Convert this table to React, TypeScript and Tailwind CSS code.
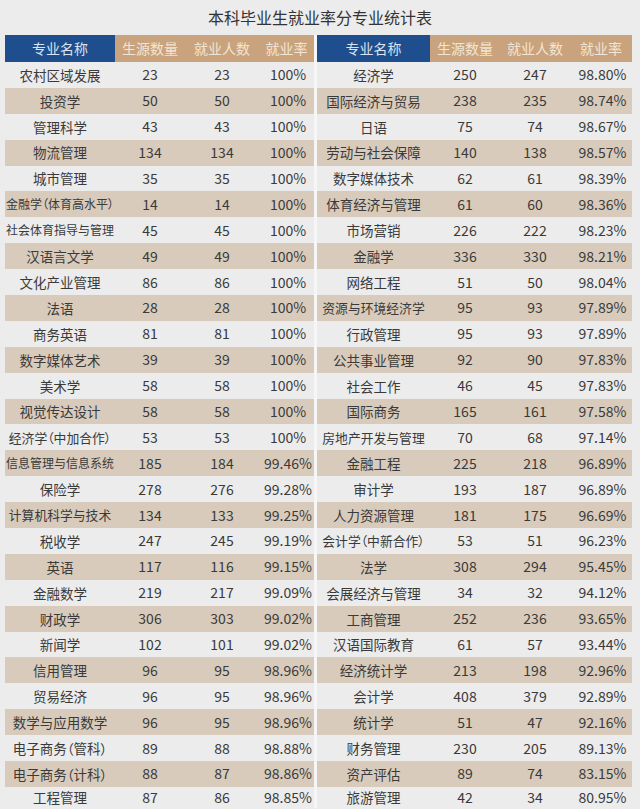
type Row = [string, number, number, string];

const left: Row[] = [
  ["农村区域发展", 23, 23, "100%"],
  ["投资学", 50, 50, "100%"],
  ["管理科学", 43, 43, "100%"],
  ["物流管理", 134, 134, "100%"],
  ["城市管理", 35, 35, "100%"],
  ["金融学（体育高水平）", 14, 14, "100%"],
  ["社会体育指导与管理", 45, 45, "100%"],
  ["汉语言文学", 49, 49, "100%"],
  ["文化产业管理", 86, 86, "100%"],
  ["法语", 28, 28, "100%"],
  ["商务英语", 81, 81, "100%"],
  ["数字媒体艺术", 39, 39, "100%"],
  ["美术学", 58, 58, "100%"],
  ["视觉传达设计", 58, 58, "100%"],
  ["经济学（中加合作）", 53, 53, "100%"],
  ["信息管理与信息系统", 185, 184, "99.46%"],
  ["保险学", 278, 276, "99.28%"],
  ["计算机科学与技术", 134, 133, "99.25%"],
  ["税收学", 247, 245, "99.19%"],
  ["英语", 117, 116, "99.15%"],
  ["金融数学", 219, 217, "99.09%"],
  ["财政学", 306, 303, "99.02%"],
  ["新闻学", 102, 101, "99.02%"],
  ["信用管理", 96, 95, "98.96%"],
  ["贸易经济", 96, 95, "98.96%"],
  ["数学与应用数学", 96, 95, "98.96%"],
  ["电子商务（管科）", 89, 88, "98.88%"],
  ["电子商务（计科）", 88, 87, "98.86%"],
  ["工程管理", 87, 86, "98.85%"],
];

const right: Row[] = [
  ["经济学", 250, 247, "98.80%"],
  ["国际经济与贸易", 238, 235, "98.74%"],
  ["日语", 75, 74, "98.67%"],
  ["劳动与社会保障", 140, 138, "98.57%"],
  ["数字媒体技术", 62, 61, "98.39%"],
  ["体育经济与管理", 61, 60, "98.36%"],
  ["市场营销", 226, 222, "98.23%"],
  ["金融学", 336, 330, "98.21%"],
  ["网络工程", 51, 50, "98.04%"],
  ["资源与环境经济学", 95, 93, "97.89%"],
  ["行政管理", 95, 93, "97.89%"],
  ["公共事业管理", 92, 90, "97.83%"],
  ["社会工作", 46, 45, "97.83%"],
  ["国际商务", 165, 161, "97.58%"],
  ["房地产开发与管理", 70, 68, "97.14%"],
  ["金融工程", 225, 218, "96.89%"],
  ["审计学", 193, 187, "96.89%"],
  ["人力资源管理", 181, 175, "96.69%"],
  ["会计学（中新合作）", 53, 51, "96.23%"],
  ["法学", 308, 294, "95.45%"],
  ["会展经济与管理", 34, 32, "94.12%"],
  ["工商管理", 252, 236, "93.65%"],
  ["汉语国际教育", 61, 57, "93.44%"],
  ["经济统计学", 213, 198, "92.96%"],
  ["会计学", 408, 379, "92.89%"],
  ["统计学", 51, 47, "92.16%"],
  ["财务管理", 230, 205, "89.13%"],
  ["资产评估", 89, 74, "83.15%"],
  ["旅游管理", 42, 34, "80.95%"],
];

// 名称太长时缩小字号；括号按半角宽度算（palt）
function nameSize(name: string) {
  const parens = (name.match(/[（）]/g) || []).length;
  const w = name.length - parens * 0.5;
  if (w >= 9) return "text-[12px]";
  if (w >= 8) return "text-[12.8px]";
  return "text-[13.5px]";
}

function Table({ rows, cols }: { rows: Row[]; cols: string }) {
  return (
    <div className="flex flex-col">
      <div className={`grid h-[27px] items-center text-[14px] ${cols}`}>
        <div className="flex h-full items-center justify-center bg-[#1f4e8e] text-[#dbe3ee]">专业名称</div>
        <div className="flex h-full items-center justify-center bg-[#c9a37d] text-[#f3e5d3]">生源数量</div>
        <div className="flex h-full items-center justify-center bg-[#c9a37d] text-[#f3e5d3]">就业人数</div>
        <div className="flex h-full items-center justify-center bg-[#c9a37d] text-[#f3e5d3]">就业率</div>
      </div>
      {rows.map((r, i) => (
        <div
          key={r[0]}
          className={`grid shrink-0 items-center text-[14px] text-[#3a3a3a] ${cols} ${
            i === rows.length - 1 ? "h-[21px]" : "h-[25.9px]"
          } ${i % 2 === 1 ? "bg-[#d9cbbb]" : "bg-[#ececec]"}`}
        >
          <div className={`whitespace-nowrap text-center [font-feature-settings:'palt'] ${nameSize(r[0])}`}>
            {r[0]}
          </div>
          <div className="text-center">{r[1]}</div>
          <div className="text-center">{r[2]}</div>
          <div className="pl-[3px] text-center">{r[3]}</div>
        </div>
      ))}
    </div>
  );
}

export default function App() {
  return (
    <div
      className="h-[809px] w-[640px] overflow-hidden bg-[#ececec]"
      style={{ fontFamily: '"Noto Sans CJK SC", "Noto Sans", sans-serif' }}
    >
      <div className="flex h-[35px] items-center justify-center pb-[2px] text-[16px] text-[#333]">
        本科毕业生就业率分专业统计表
      </div>
      <div className="flex pl-[5px]">
        <div className="w-[309px]">
          <Table rows={left} cols="grid-cols-[110px_70px_74px_55px]" />
        </div>
        <div className="w-[3px] self-stretch bg-[#f6f6f6]" />
        <div className="w-[315px]">
          <Table rows={right} cols="grid-cols-[113px_70px_70px_62px]" />
        </div>
      </div>
    </div>
  );
}
